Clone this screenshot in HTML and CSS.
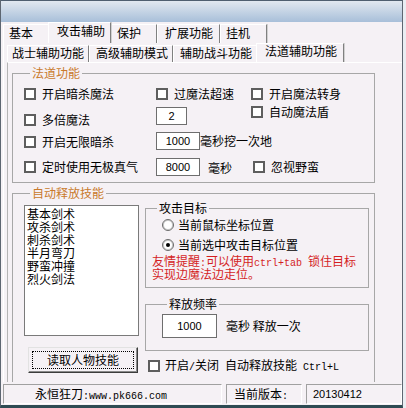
FILE: index.html
```html
<!DOCTYPE html>
<html lang="zh-CN">
<head>
    <meta charset="UTF-8">
    <meta name="viewport" content="width=device-width, initial-scale=1.0">
    <title>法道辅助功能</title>
    <link rel="stylesheet" href="styles.css">
</head>
<body>
    <div class="window">
        <div class="titlebar"></div>

        <div class="tabrow outer-tabs">
            <span class="tab t-jb">基本</span>
            <span class="tab tab-on t-gj">攻击辅助</span>
            <span class="tab t-bh">保护</span>
            <span class="tab t-kz">扩展功能</span>
            <span class="tab t-gjj">挂机</span>
        </div>

        <div class="outer-panel">
            <div class="tabrow inner-tabs">
                <span class="tab t-zs">战士辅助功能</span>
                <span class="tab t-gjfz">高级辅助模式</span>
                <span class="tab t-zd">辅助战斗功能</span>
                <span class="tab tab-on t-fd">法道辅助功能</span>
            </div>

            <div class="inner-panel">
                <fieldset class="group group-magic">
                    <legend class="orange">法道功能</legend>
                    <div class="mrow row-a">
                        <label class="check col1"><span class="box"></span>开启暗杀魔法</label>
                        <label class="check col2"><span class="box"></span>过魔法超速</label>
                        <label class="check"><span class="box"></span>开启魔法转身</label>
                    </div>
                    <div class="mrow row-b">
                        <label class="check col1 mt8"><span class="box"></span>多倍魔法</label>
                        <div class="col2"><input class="num w31 mt2" type="text" value="2" readonly></div>
                        <label class="check"><span class="box"></span>自动魔法盾</label>
                    </div>
                    <div class="mrow row-c">
                        <label class="check col1 mt5"><span class="box"></span>开启无限暗杀</label>
                        <input class="num w44 mt2" type="text" value="1000" readonly>
                        <span class="txt mt4">毫秒挖一次地</span>
                    </div>
                    <div class="mrow row-d">
                        <label class="check col1 mt4"><span class="box"></span>定时使用无极真气</label>
                        <input class="num w44 mt2" type="text" value="8000" readonly>
                        <span class="txt mt5 ml8">毫秒</span>
                        <label class="check mt4 ml21"><span class="box"></span>忽视野蛮</label>
                    </div>
                </fieldset>

                <fieldset class="group group-auto">
                    <legend class="orange">自动释放技能</legend>
                    <div class="auto-body">
                        <div class="auto-left">
                            <div class="listbox">
                                <div>基本剑术</div>
                                <div>攻杀剑术</div>
                                <div>刺杀剑术</div>
                                <div>半月弯刀</div>
                                <div>野蛮冲撞</div>
                                <div>烈火剑法</div>
                            </div>
                            <button class="btn" type="button"><span class="focus">读取人物技能</span></button>
                        </div>

                        <div class="auto-right">
                            <fieldset class="group group-target">
                                <legend>攻击目标</legend>
                                <label class="radio"><span class="dot"></span>当前鼠标坐标位置</label>
                                <label class="radio radio-2"><span class="dot dot-on"></span>当前选中攻击目标位置</label>
                                <p class="tip">友情提醒<span class="en">:</span>可以使用<span class="en">ctrl+tab </span>锁住目标<br>实现边魔法边走位。</p>
                            </fieldset>

                            <fieldset class="group group-freq">
                                <legend>释放频率</legend>
                                <div class="freq-row">
                                    <input class="num w55" type="text" value="1000" readonly>
                                    <span class="txt">毫秒 释放一次</span>
                                </div>
                            </fieldset>

                            <label class="check toggle"><span class="box"></span><span class="txt">开启<span class="en">/</span>关闭<span class="en"> </span>自动释放技能<span class="en"> Ctrl+L</span></span></label>
                        </div>
                    </div>
                </fieldset>
            </div>
        </div>

        <div class="statusbar">
            <span class="pane pane-site">永恒狂刀<span class="en">:www.pk666.com</span></span>
            <span class="pane pane-label">当前版本<span class="en">:</span></span>
            <span class="pane pane-ver">20130412</span>
        </div>
    </div>
</body>
</html>
```

FILE: styles.css
```css
* {
    box-sizing: border-box;
}
html, body {
    margin: 0;
    padding: 0;
    background-color: #e9edf2;
}
body {
    font-family: "Noto Sans CJK SC", "Liberation Sans", sans-serif;
    font-size: 12px;
    line-height: 14px;
    color: #000;
}
.window {
    width: 403px;
    height: 408px;
    background-color: #f5f1f5;
    border-left: 1px solid #5d6671;
    border-right: 1px solid #5d6671;
    border-bottom: 3px solid #2e4b53;
    overflow: hidden;
}
.titlebar {
    height: 22px;
    border-top: 1px solid #4f5f70;
    background: linear-gradient(#e1e8f0, #a8bfd9);
}
.en {
    font-family: "Liberation Mono", monospace;
    font-size: 10px;
    white-space: pre;
}

/* tabs */
.tabrow {
    display: flex;
    align-items: flex-end;
}
.outer-tabs {
    height: 21px;
    padding-left: 2px;
}
.tab {
    height: 19px;
    padding-top: 1px;
    border-top: 1px solid #fff;
    border-left: 1px solid #fff;
    border-right: 1px solid #808080;
    box-shadow: 1px 0 0 #d0d0d0;
    white-space: nowrap;
}
.tab-on {
    height: 21px;
    margin-left: -2px;
    position: relative;
    background-color: #f5f1f5;
}
.t-jb { width: 47px; padding-left: 5px; }
.t-gj { width: 63px; padding-left: 8px; }
.t-bh { width: 46px; padding-left: 5px; }
.t-kz { width: 63px; padding-left: 7px; }
.t-gjj { width: 47px; padding-left: 5px; }

.outer-panel {
    height: 339px;
    margin-left: 2px;
    padding-left: 3px;
    border-left: 1px solid #fff;
}
.inner-tabs {
    height: 19px;
}
.inner-tabs .tab {
    height: 17px;
    padding-top: 0;
}
.inner-tabs .tab-on {
    height: 19px;
    line-height: 13px;
}
.t-zs { width: 82px; padding-left: 4px; }
.t-gjfz { width: 84px; padding-left: 6px; }
.t-zd { width: 85px; padding-left: 6px; }
.t-fd { width: 88px; padding-left: 8px; }

.inner-panel {
    height: 320px;
    padding-left: 4px;
    border-top: 1px solid #fff;
    border-left: 1px solid #b4b4b4;
    overflow: hidden;
}

/* group boxes */
.group {
    margin: 0;
    padding: 0;
    min-width: 0;
    border: 1px solid #a7a7a7;
}
.group legend {
    margin-left: 6px;
    padding: 0 2px;
    line-height: 12px;
}
.orange {
    color: #c97a2c;
}
.group-magic {
    width: 363px;
    margin-top: 4px;
    padding: 8px 0 6px 11px;
}
.mrow {
    display: flex;
    align-items: flex-start;
}
.row-a { height: 18px; }
.row-b { height: 25px; }
.row-c { height: 26px; }
.row-d { height: 20px; }
.col1 { width: 132px; }
.col2 { width: 95px; }
.mt2 { margin-top: 2px; }
.mt4 { margin-top: 4px; }
.mt5 { margin-top: 5px; }
.mt8 { margin-top: 8px; }
.ml8 { margin-left: 8px; }
.ml21 { margin-left: 21px; }

.check, .radio {
    display: flex;
    align-items: center;
    height: 14px;
    white-space: nowrap;
}
.box {
    width: 12px;
    height: 12px;
    margin-right: 6px;
    border: 2px solid #5e5e5e;
    background-color: #fff;
    flex-shrink: 0;
}
.txt {
    white-space: nowrap;
}
.num {
    display: block;
    height: 18px;
    padding: 0;
    border: 1px solid #6e6e6e;
    background-color: #fff;
    font-family: "Liberation Sans", sans-serif;
    font-size: 11px;
    text-align: center;
    color: #000;
    outline: none;
}
.w31 { width: 31px; }
.w44 { width: 44px; }
.w55 { width: 55px; height: 24px; }

.group-auto {
    width: 363px;
    margin-top: 4px;
    padding: 3px 0 60px 11px;
}
.auto-body {
    display: flex;
    align-items: flex-start;
}
.auto-left {
    width: 115px;
    padding-top: 3px;
}
.listbox {
    height: 131px;
    padding: 1px 0 0 2px;
    border: 1px solid #7a7a7a;
    background-color: #fff;
    line-height: 13px;
}
.btn {
    display: block;
    width: 110px;
    height: 26px;
    margin: 11px 0 0 4px;
    padding: 3px;
    border: 1px solid;
    border-color: #e2e2e2 #3c3c3c #3c3c3c #e2e2e2;
    box-shadow: inset -1px -1px 0 #8a8a8a;
    background-color: #f5f1f5;
    font: inherit;
    color: #000;
}
.focus {
    display: flex;
    align-items: center;
    justify-content: center;
    height: 100%;
    border: 1px dotted #000;
}
.auto-right {
    width: 224px;
    margin-left: 6px;
}
.group-target {
    width: 224px;
    padding: 4px 0 8px 6px;
}
.group-target legend,
.group-freq legend {
    margin-left: 5px;
}
.radio {
    margin-left: 10px;
}
.radio-2 {
    margin-top: 6px;
}
.dot {
    position: relative;
    width: 12px;
    height: 12px;
    margin-right: 4px;
    border: 1px solid #6a6a6a;
    border-radius: 50%;
    box-shadow: inset 0 0 0 1px #c8c8c8;
    background-color: #fff;
    flex-shrink: 0;
}
.dot-on::after {
    content: "";
    position: absolute;
    left: 3px;
    top: 3px;
    width: 4px;
    height: 4px;
    border-radius: 50%;
    background-color: #000;
}
.tip {
    margin: 4px 0 0;
    color: #d41f1f;
    line-height: 10px;
    white-space: nowrap;
}
.group-freq {
    width: 224px;
    margin-top: 10px;
    padding: 4px 0 12px 16px;
}
.freq-row {
    display: flex;
    align-items: center;
}
.freq-row .txt {
    margin-left: 9px;
}
.toggle {
    margin: 8px 0 0 3px;
}
.toggle .box {
    margin-right: 5px;
}

/* status bar */
.statusbar {
    display: flex;
    gap: 4px;
    height: 23px;
    padding: 2px 0 0 2px;
}
.pane {
    height: 20px;
    line-height: 18px;
    border-top: 1px solid #a0a0a0;
    border-left: 1px solid #a0a0a0;
    border-right: 1px solid #fff;
    border-bottom: 1px solid #fff;
    white-space: nowrap;
}
.pane-site { width: 219px; padding-left: 31px; }
.pane-label { width: 76px; padding-left: 7px; }
.pane-ver {
    flex: 1;
    padding-left: 6px;
    font-family: "Liberation Sans", sans-serif;
    font-size: 11px;
}
```
